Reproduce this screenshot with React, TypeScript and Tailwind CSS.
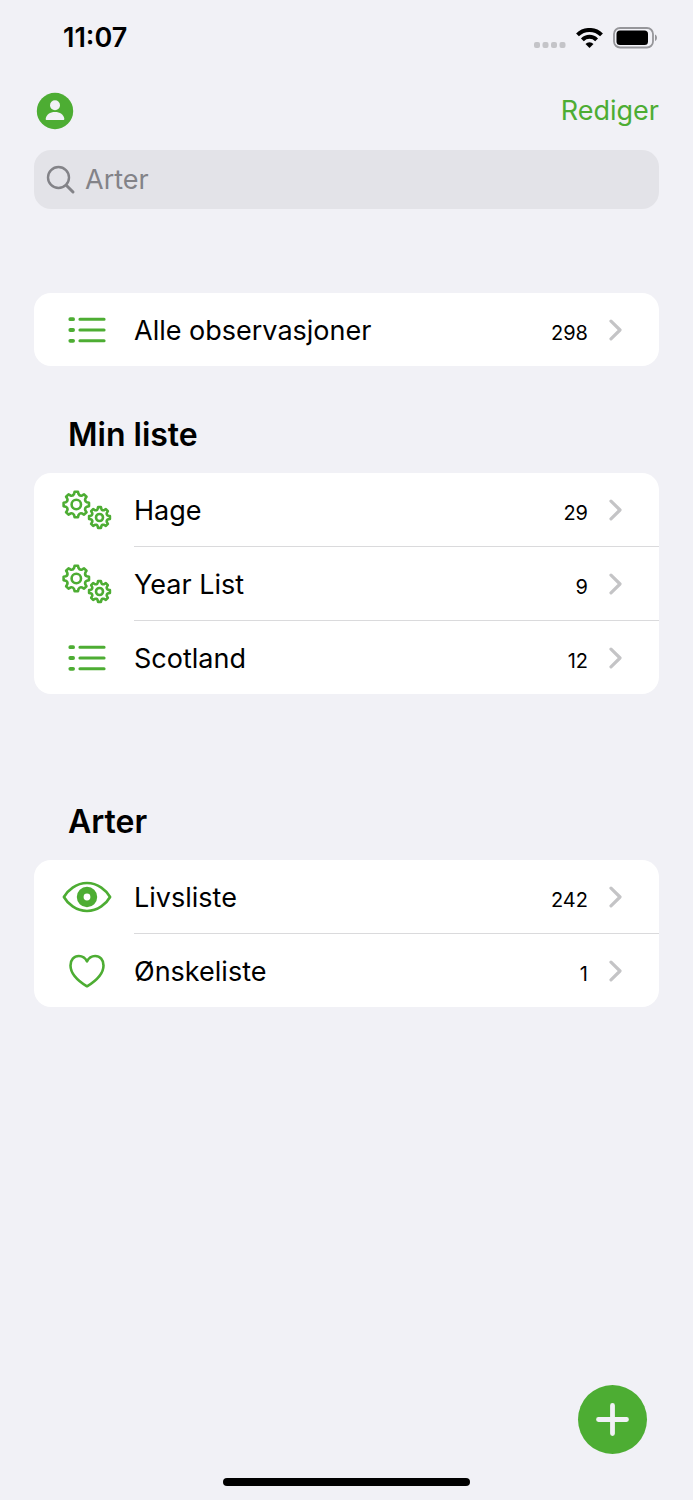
import type { ReactNode } from 'react'

type Row = {
  label: string
  count: number
  icon: ReactNode
}

function gearPath(cx: number, cy: number, outer: number, root: number) {
  const teeth = 8
  const step = (Math.PI * 2) / teeth
  const at = (radius: number, angle: number) =>
    `${(cx + radius * Math.cos(angle)).toFixed(2)} ${(cy + radius * Math.sin(angle)).toFixed(2)}`

  let d = ''
  for (let i = 0; i < teeth; i++) {
    const a = i * step
    d += `${i === 0 ? 'M' : 'L'}${at(outer, a - step * 0.17)} L${at(outer, a + step * 0.17)} `
    d += `L${at(root + 1, a + step * 0.26)} Q${at(root - 1, a + step * 0.5)} ${at(root + 1, a + step * 0.74)} `
  }
  return d + 'Z'
}

function GearsIcon() {
  return (
    <svg width="50" height="42" viewBox="0 0 50 42" fill="none" stroke="#4dad33" strokeWidth="2.6" strokeLinejoin="round" aria-hidden="true">
      <path d={gearPath(14.3, 15.5, 12.8, 9.8)} />
      <circle cx="14.3" cy="15.5" r="4.7" />
      <path d={gearPath(37.5, 28.5, 10.5, 8)} />
      <circle cx="37.5" cy="28.5" r="3.5" />
    </svg>
  )
}

function ListIcon() {
  return (
    <svg width="38" height="28" viewBox="0 0 38 28" fill="none" stroke="#4dad33" strokeLinecap="round" aria-hidden="true">
      <path d="M2.3 3.2h2.8M2.3 14h2.8M2.3 24.8h2.8" strokeWidth="3.8" />
      <path d="M11.9 3.2h24.2M11.9 14h24.2M11.9 24.8h24.2" strokeWidth="3" />
    </svg>
  )
}

function EyeIcon() {
  return (
    <svg width="50" height="32" viewBox="0 0 50 32" fill="none" stroke="#4dad33" strokeLinejoin="round" aria-hidden="true">
      <path d="M1.9 16C5.5 9.5 14 2 25 2s19.5 7.5 23.1 14C44.5 22.5 36 30 25 30S5.5 22.5 1.9 16Z" strokeWidth="2.6" />
      <circle cx="25" cy="16" r="6.8" strokeWidth="6.8" />
    </svg>
  )
}

function HeartIcon() {
  return (
    <svg width="38" height="34" viewBox="0 0 38 34" fill="none" stroke="#4dad33" strokeWidth="2.6" strokeLinejoin="round" aria-hidden="true">
      <path d="M19 7.3C17.3 3.9 14.3 2 10.9 2 5.8 2 2.5 6.1 2.5 11.4 2.5 19.5 9.500 26.500 19 32.300 28.500 26.500 35.500 19.500 35.500 11.400 35.500 6.100 32.200 2 27.100 2 23.700 2 20.700 3.900 19 7.300Z" />
    </svg>
  )
}

function Chevron() {
  return (
    <svg width="13" height="22" viewBox="0 0 13 22" fill="none" stroke="#c4c4c6" strokeWidth="3.2" strokeLinecap="round" strokeLinejoin="round" aria-hidden="true">
      <path d="M2 2.2 11 11 2 19.8" />
    </svg>
  )
}

function StatusBar() {
  return (
    <div className="flex h-[76px] items-center justify-between pl-[63px] pr-[35px]">
      <span className="text-[27px] font-semibold leading-8">11:07</span>
      <div className="flex items-center">
        <svg width="32" height="22" viewBox="0 0 32 22" fill="#c4c4c8" aria-hidden="true">
          <rect x="0" y="15" width="6" height="6" rx="2" />
          <rect x="8.5" y="15" width="6" height="6" rx="2" />
          <rect x="17" y="15" width="6" height="6" rx="2" />
          <rect x="25.5" y="15" width="6" height="6" rx="2" />
        </svg>
        <svg className="ml-2.5" width="27" height="20" viewBox="0 0 27 20" aria-hidden="true">
          <path d="M1.5 6.9a17 17 0 0 1 24 0M6.4 11.8a10 10 0 0 1 14.2 0" fill="none" stroke="#000" strokeWidth="4" />
          <path d="M13.5 20 9.5 16a5.700 5.700 0 0 1 8 0Z" />
        </svg>
        <svg className="ml-2.5" width="45" height="22" viewBox="0 0 45 22" aria-hidden="true">
          <rect x="1" y="1" width="39" height="19.5" rx="6" fill="none" stroke="#96969a" strokeWidth="1.8" />
          <rect x="3.5" y="3.5" width="31.5" height="14.5" rx="3.5" />
          <path d="M42 7.5c2.6.8 2.6 5.700 0 6.500Z" fill="#96969a" />
        </svg>
      </div>
    </div>
  )
}

function RowGroup({ rows }: { rows: Row[] }) {
  return (
    <ul className="overflow-hidden rounded-[17px] bg-white">
      {rows.map((row) => (
        <li key={row.label} className="group">
          <a href="#" className="flex items-center pl-7">
            <span className="flex w-[50px] shrink-0 justify-center">{row.icon}</span>
            <span className="ml-[22px] flex flex-1 items-center border-b border-[#dadadc] pr-[37px] group-last:border-b-0">
              <span className="flex h-[73px] flex-1 items-baseline justify-between pt-5">
                <span className="text-[27px] leading-9">{row.label}</span>
                <span className="text-[20px] leading-9">{row.count}</span>
              </span>
              <span className="ml-[21px]">
                <Chevron />
              </span>
            </span>
          </a>
        </li>
      ))}
    </ul>
  )
}

const all: Row[] = [{ label: 'Alle observasjoner', count: 298, icon: <ListIcon /> }]

const myLists: Row[] = [
  { label: 'Hage', count: 29, icon: <GearsIcon /> },
  { label: 'Year List', count: 9, icon: <GearsIcon /> },
  { label: 'Scotland', count: 12, icon: <ListIcon /> },
]

const species: Row[] = [
  { label: 'Livsliste', count: 242, icon: <EyeIcon /> },
  { label: 'Ønskeliste', count: 1, icon: <HeartIcon /> },
]

export default function App() {
  return (
    <div className="flex min-h-screen flex-col bg-[#f1f1f6] font-['Inter',sans-serif] text-black">
      <StatusBar />

      <header className="flex h-[70px] items-center justify-between pl-9 pr-[34px]">
        <button type="button" aria-label="Profil">
          <svg width="38" height="38" viewBox="0 0 38 38" aria-hidden="true">
            <circle cx="19" cy="19" r="18.2" fill="#4dad33" />
            <circle cx="19" cy="13.3" r="5" fill="#f1f1f6" />
            <path d="M9.700 26.700C10.300 22.500 14 20 19 20s8.700 2.500 9.300 6.700c.1.900-.3 1.300-1.100 1.300H10.800c-.8 0-1.200-.4-1.100-1.300Z" fill="#f1f1f6" />
          </svg>
        </button>
        <button type="button" className="text-[27px] leading-9 text-[#4dad33]">
          Rediger
        </button>
      </header>

      <main className="px-[34px] pt-1">
        <label className="flex h-[59px] items-center rounded-[17px] bg-[#e3e3e8] pl-3">
          <svg className="shrink-0" width="30" height="30" viewBox="0 0 30 30" fill="none" stroke="#838388" strokeLinecap="round" aria-hidden="true">
            <circle cx="12.5" cy="12.5" r="10.5" strokeWidth="2.4" />
            <path d="m20.500 20.500 6.500 6.500" strokeWidth="3" />
          </svg>
          <input
            type="search"
            aria-label="Arter"
            placeholder="Arter"
            className="ml-[9px] w-full min-w-0 flex-1 bg-transparent text-[27px] leading-9 outline-none placeholder:text-[#838388]"
          />
        </label>

        <section className="mt-[84px]">
          <RowGroup rows={all} />
        </section>

        <section className="mt-[49px]">
          <h2 className="mb-[18px] pl-[34px] text-[32px] font-semibold leading-10">Min liste</h2>
          <RowGroup rows={myLists} />
        </section>

        <section className="mt-[108px]">
          <h2 className="mb-[18px] pl-[34px] text-[32px] font-semibold leading-10">Arter</h2>
          <RowGroup rows={species} />
        </section>
      </main>

      <footer className="mt-auto flex flex-col pb-3.5 pt-10">
        <button
          type="button"
          aria-label="Legg til"
          className="mr-[46px] flex size-[69px] items-center justify-center self-end rounded-full bg-[#4dad33]"
        >
          <svg width="33" height="33" viewBox="0 0 33 33" fill="none" stroke="#f1f1f6" strokeWidth="4.8" strokeLinecap="round" aria-hidden="true">
            <path d="M16.5 2.500v28M2.500 16.500h28" />
          </svg>
        </button>
        <div className="mt-6 h-2 w-[247px] self-center rounded-full bg-black" />
      </footer>
    </div>
  )
}
